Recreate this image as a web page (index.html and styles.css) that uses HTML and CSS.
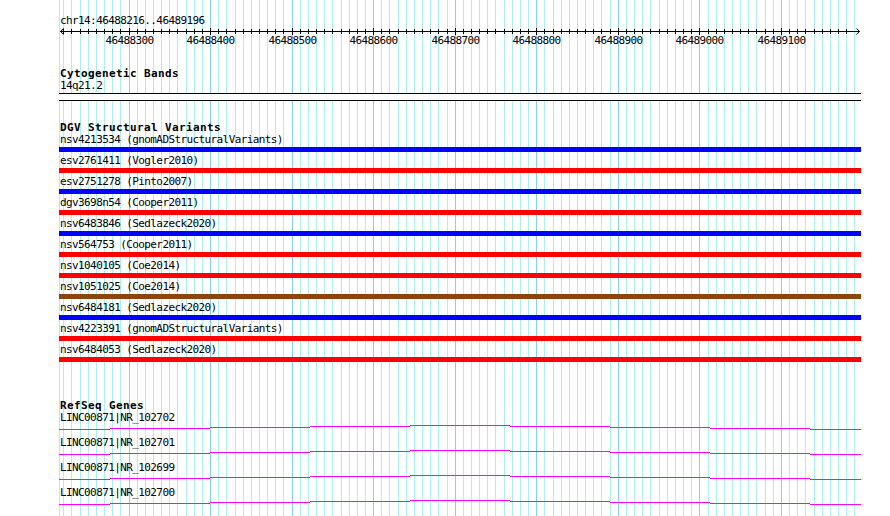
FILE: index.html
```
<!DOCTYPE html>
<html lang="en">
<head>
    <meta charset="UTF-8">
    <title>chr14:46488216..46489196</title>
    <link rel="stylesheet" href="styles.css">
</head>
<body>
    <div class="view">
        <!-- 10 bp grid, one line per column; majors every 100 bp -->
        <svg class="grid" width="890" height="516" shape-rendering="crispEdges">
            <path class="grid-minor" d="M59.5 0v516M63.5 0v516M71.5 0v516M80.5 0v516M88.5 0v516M96.5 0v516M104.5 0v516M112.5 0v516M120.5 0v516M137.5 0v516M145.5 0v516M153.5 0v516M161.5 0v516M169.5 0v516M177.5 0v516M186.5 0v516M194.5 0v516M202.5 0v516M218.5 0v516M226.5 0v516M235.5 0v516M243.5 0v516M251.5 0v516M259.5 0v516M267.5 0v516M275.5 0v516M283.5 0v516M300.5 0v516M308.5 0v516M316.5 0v516M324.5 0v516M332.5 0v516M341.5 0v516M349.5 0v516M357.5 0v516M365.5 0v516M381.5 0v516M389.5 0v516M398.5 0v516M406.5 0v516M414.5 0v516M422.5 0v516M430.5 0v516M438.5 0v516M447.5 0v516M463.5 0v516M471.5 0v516M479.5 0v516M487.5 0v516M495.5 0v516M504.5 0v516M512.5 0v516M520.5 0v516M528.5 0v516M544.5 0v516M553.5 0v516M561.5 0v516M569.5 0v516M577.5 0v516M585.5 0v516M593.5 0v516M601.5 0v516M610.5 0v516M626.5 0v516M634.5 0v516M642.5 0v516M650.5 0v516M659.5 0v516M667.5 0v516M675.5 0v516M683.5 0v516M691.5 0v516M708.5 0v516M716.5 0v516M724.5 0v516M732.5 0v516M740.5 0v516M748.5 0v516M756.5 0v516M765.5 0v516M773.5 0v516M789.5 0v516M797.5 0v516M805.5 0v516M814.5 0v516M822.5 0v516M830.5 0v516M838.5 0v516M846.5 0v516M854.5 0v516"/>
            <path class="grid-major" d="M129.5 0v516M210.5 0v516M292.5 0v516M373.5 0v516M455.5 0v516M536.5 0v516M618.5 0v516M699.5 0v516M781.5 0v516"/>
        </svg>

        <div class="tracks">
            <div class="locus">chr14:46488216..46489196</div>

            <svg class="ruler" width="890" height="21">
                <path class="ruler-line" shape-rendering="crispEdges" d="M60 4.5H860M63.5 2v5M71.5 2v5M80.5 2v5M88.5 2v5M96.5 2v5M104.5 2v5M112.5 2v5M120.5 2v5M137.5 2v5M145.5 2v5M153.5 2v5M161.5 2v5M169.5 2v5M177.5 2v5M186.5 2v5M194.5 2v5M202.5 2v5M218.5 2v5M226.5 2v5M235.5 2v5M243.5 2v5M251.5 2v5M259.5 2v5M267.5 2v5M275.5 2v5M283.5 2v5M300.5 2v5M308.5 2v5M316.5 2v5M324.5 2v5M332.5 2v5M341.5 2v5M349.5 2v5M357.5 2v5M365.5 2v5M381.5 2v5M389.5 2v5M398.5 2v5M406.5 2v5M414.5 2v5M422.5 2v5M430.5 2v5M438.5 2v5M447.5 2v5M463.5 2v5M471.5 2v5M479.5 2v5M487.5 2v5M495.5 2v5M504.5 2v5M512.5 2v5M520.5 2v5M528.5 2v5M544.5 2v5M553.5 2v5M561.5 2v5M569.5 2v5M577.5 2v5M585.5 2v5M593.5 2v5M601.5 2v5M610.5 2v5M626.5 2v5M634.5 2v5M642.5 2v5M650.5 2v5M659.5 2v5M667.5 2v5M675.5 2v5M683.5 2v5M691.5 2v5M708.5 2v5M716.5 2v5M724.5 2v5M732.5 2v5M740.5 2v5M748.5 2v5M756.5 2v5M765.5 2v5M773.5 2v5M789.5 2v5M797.5 2v5M805.5 2v5M814.5 2v5M822.5 2v5M830.5 2v5M838.5 2v5M846.5 2v5M129.5 1v7M210.5 1v7M292.5 1v7M373.5 1v7M455.5 1v7M536.5 1v7M618.5 1v7M699.5 1v7M781.5 1v7"/>
                <path class="ruler-line" d="M63.5 1.5L60.5 4.5L63.5 7.5M856.5 1.5L859.5 4.5L856.5 7.5"/>
                <g class="ruler-labels">
                    <text x="129.5" y="17">46488300</text>
                    <text x="210.5" y="17">46488400</text>
                    <text x="292.5" y="17">46488500</text>
                    <text x="373.5" y="17">46488600</text>
                    <text x="455.5" y="17">46488700</text>
                    <text x="536.5" y="17">46488800</text>
                    <text x="618.5" y="17">46488900</text>
                    <text x="699.5" y="17">46489000</text>
                    <text x="781.5" y="17">46489100</text>
                </g>
            </svg>

            <section class="track cyto">
                <h2 class="track-title">Cytogenetic Bands</h2>
                <div class="feat-label">14q21.2</div>
                <div class="band"></div>
            </section>

            <section class="track dgv">
                <h2 class="track-title">DGV Structural Variants</h2>
                <div class="sv">
                    <div class="feat-label">nsv4213534 (gnomADStructuralVariants)</div>
                    <div class="sv-bar gain"></div>
                </div>
                <div class="sv">
                    <div class="feat-label">esv2761411 (Vogler2010)</div>
                    <div class="sv-bar loss"></div>
                </div>
                <div class="sv">
                    <div class="feat-label">esv2751278 (Pinto2007)</div>
                    <div class="sv-bar gain"></div>
                </div>
                <div class="sv">
                    <div class="feat-label">dgv3698n54 (Cooper2011)</div>
                    <div class="sv-bar loss"></div>
                </div>
                <div class="sv">
                    <div class="feat-label">nsv6483846 (Sedlazeck2020)</div>
                    <div class="sv-bar gain"></div>
                </div>
                <div class="sv">
                    <div class="feat-label">nsv564753 (Cooper2011)</div>
                    <div class="sv-bar loss"></div>
                </div>
                <div class="sv">
                    <div class="feat-label">nsv1040105 (Coe2014)</div>
                    <div class="sv-bar loss"></div>
                </div>
                <div class="sv">
                    <div class="feat-label">nsv1051025 (Coe2014)</div>
                    <div class="sv-bar both"></div>
                </div>
                <div class="sv">
                    <div class="feat-label">nsv6484181 (Sedlazeck2020)</div>
                    <div class="sv-bar gain"></div>
                </div>
                <div class="sv">
                    <div class="feat-label">nsv4223391 (gnomADStructuralVariants)</div>
                    <div class="sv-bar loss"></div>
                </div>
                <div class="sv">
                    <div class="feat-label">nsv6484053 (Sedlazeck2020)</div>
                    <div class="sv-bar loss"></div>
                </div>
            </section>

            <section class="track refseq">
                <h2 class="track-title">RefSeq Genes</h2>
                <div class="gene">
                    <div class="feat-label">LINC00871|NR_102702</div>
                    <svg class="gene-line" width="890" height="13" shape-rendering="crispEdges"><path d="M59 5.5H110M110 4.5H210M210 3.5H310M310 2.5H410M410 1.5H510M510 2.5H610M610 3.5H710M710 4.5H810M810 5.5H861"/></svg>
                </div>
                <div class="gene">
                    <div class="feat-label">LINC00871|NR_102701</div>
                    <svg class="gene-line" width="890" height="13" shape-rendering="crispEdges"><path d="M59 5.5H110M110 4.5H210M210 3.5H310M310 2.5H410M410 1.5H510M510 2.5H610M610 3.5H710M710 4.5H810M810 5.5H861"/></svg>
                </div>
                <div class="gene">
                    <div class="feat-label">LINC00871|NR_102699</div>
                    <svg class="gene-line" width="890" height="13" shape-rendering="crispEdges"><path d="M59 5.5H110M110 4.5H210M210 3.5H310M310 2.5H410M410 1.5H510M510 2.5H610M610 3.5H710M710 4.5H810M810 5.5H861"/></svg>
                </div>
                <div class="gene">
                    <div class="feat-label">LINC00871|NR_102700</div>
                    <svg class="gene-line" width="890" height="13" shape-rendering="crispEdges"><path d="M59 5.5H110M110 4.5H210M210 3.5H310M310 2.5H410M410 1.5H510M510 2.5H610M610 3.5H710M710 4.5H810M810 5.5H861"/></svg>
                </div>
            </section>
        </div>
    </div>
</body>
</html>
```

FILE: styles.css
```
body {
    margin: 0;
    background-color: #fff;
    color: #000;
    font-family: "DejaVu Sans Mono", "Liberation Mono", monospace;
}
.view {
    position: relative;
    width: 890px;
    height: 516px;
    padding-top: 15px;
    box-sizing: border-box;
    overflow: hidden;
}
.grid {
    position: absolute;
    top: 0;
    left: 0;
}
.grid-minor {
    stroke: #afeeee;
    stroke-width: 1;
}
.grid-major {
    stroke: #87cefa;
    stroke-width: 1;
}
.tracks {
    position: relative;
}
.locus, .feat-label {
    padding-left: 60px;
    font-size: 11px;
    letter-spacing: -0.6px;
    line-height: 12px;
    height: 12px;
    white-space: nowrap;
}
.ruler {
    display: block;
}
.ruler-line {
    fill: none;
    stroke: #000;
    stroke-width: 1;
}
.ruler-labels text {
    font-family: "DejaVu Sans Mono", "Liberation Mono", monospace;
    font-size: 11px;
    letter-spacing: -0.6px;
    text-anchor: middle;
    fill: #000;
}
.track-title {
    margin: 0;
    padding-left: 60px;
    font-size: 11px;
    font-weight: bold;
    letter-spacing: 0.38px;
    line-height: 12px;
    height: 12px;
}
.cyto .track-title {
    margin-top: 20px;
}
.band {
    margin: 1px 0 0 59px;
    width: 802px;
    height: 8px;
    box-sizing: border-box;
    border-top: 1px solid #000;
    border-bottom: 1px solid #000;
    background-color: #fff;
}
.dgv .track-title {
    margin-top: 21px;
}
.sv {
    height: 21px;
}
.sv-bar {
    margin: 1px 0 0 59px;
    width: 802px;
    height: 5px;
}
.sv-bar.gain {
    background-color: #0000ff;
}
.sv-bar.loss {
    background-color: #ff0000;
}
.sv-bar.both {
    background-color: #8b4513;
}
.refseq .track-title {
    margin-top: 35px;
}
.gene {
    height: 25px;
}
.gene-line {
    display: block;
}
.gene-line path {
    fill: none;
    stroke: #ff00ff;
    stroke-width: 1;
}
```
